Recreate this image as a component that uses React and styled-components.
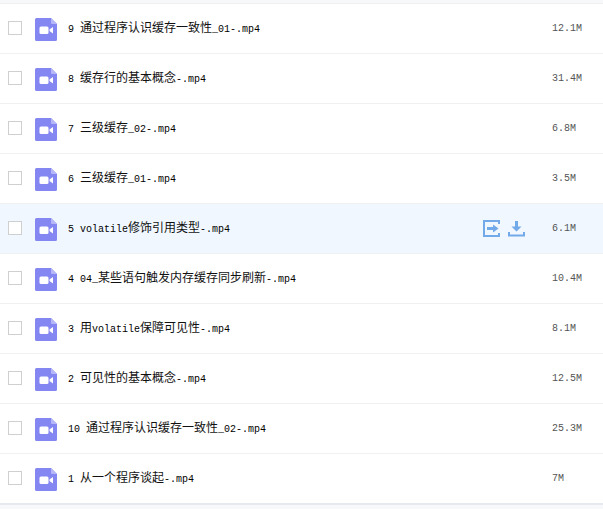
import React from "react";
import styled, { createGlobalStyle } from "styled-components";

const files = [
  { name: "9 通过程序认识缓存一致性_01-.mp4", size: "12.1M" },
  { name: "8 缓存行的基本概念-.mp4", size: "31.4M" },
  { name: "7 三级缓存_02-.mp4", size: "6.8M" },
  { name: "6 三级缓存_01-.mp4", size: "3.5M" },
  { name: "5 volatile修饰引用类型-.mp4", size: "6.1M", active: true },
  { name: "4 04_某些语句触发内存缓存同步刷新-.mp4", size: "10.4M" },
  { name: "3 用volatile保障可见性-.mp4", size: "8.1M" },
  { name: "2 可见性的基本概念-.mp4", size: "12.5M" },
  { name: "10 通过程序认识缓存一致性_02-.mp4", size: "25.3M" },
  { name: "1 从一个程序谈起-.mp4", size: "7M" },
];

const GlobalStyle = createGlobalStyle`
  html, body {
    margin: 0;
    padding: 0;
    background: #f7f8fa;
  }
`;

const Page = styled.div`
  width: 603px;
  height: 509px;
  padding-top: 3px;
  box-sizing: border-box;
  overflow: hidden;
  font-family: "Noto Sans CJK SC", "Liberation Mono", monospace;
  font-size: 12px;
  color: #111;
`;

const List = styled.div`
  border-bottom: 2px solid #e6eaf0;
  background: #fff;
`;

const Row = styled.div`
  display: flex;
  align-items: center;
  height: 50px;
  box-sizing: border-box;
  border-top: 1px solid #f0f0f0;
  background: ${(p) => (p.$active ? "#f0f7ff" : "#fff")};
`;

const Check = styled.span`
  align-self: flex-start;
  width: 14px;
  height: 14px;
  margin: 17px 0 0 8px;
  box-sizing: border-box;
  border: 1px solid #cfcfcf;
  background: #fff;
  flex: none;
`;

const FileIcon = styled.svg`
  align-self: flex-start;
  width: 22px;
  height: 23px;
  margin: 14px 0 0 13px;
  flex: none;
`;

const Name = styled.div`
  margin-left: 11px;
  flex: 1;
  white-space: nowrap;
  line-height: 16px;
`;

const Latin = styled.span`
  font-family: "Liberation Mono", monospace;
  font-size: 10px;
  color: #000;
`;

const Actions = styled.div`
  display: flex;
  align-items: center;
  gap: 8px;
  margin-right: 27px;
`;

const Size = styled.div`
  width: 51px;
  font-family: "Liberation Mono", monospace;
  font-size: 10px;
  color: #555;
  flex: none;
`;

function VideoFile() {
  return (
    <FileIcon viewBox="0 0 22 23">
      <path d="M1.5 0H16L22 6V21.5a1.5 1.5 0 0 1-1.5 1.5H1.5A1.5 1.5 0 0 1 0 21.5V1.5A1.5 1.5 0 0 1 1.5 0Z" fill="#8487f2" />
      <path d="M16 0L22 6H17a1 1 0 0 1-1-1Z" fill="#b5b7f8" />
      <rect x="4.5" y="8.5" width="9" height="7.5" rx="1.5" fill="#fff" />
      <path d="M14.5 11.5L18 9V15.5L14.5 13Z" fill="#fff" />
    </FileIcon>
  );
}

function OpenIcon() {
  return (
    <svg width="17" height="17" viewBox="0 0 17 17" fill="none">
      <path d="M16 4V1H1V16H16V13" stroke="#72a9e8" strokeWidth="2" />
      <path d="M4 7H10V4.5L15.5 8.5L10 12.5V10H4Z" fill="#72a9e8" />
    </svg>
  );
}

function DownloadIcon() {
  return (
    <svg width="17" height="17" viewBox="0 0 17 17" fill="none">
      <path d="M7 1H10V6.5H13.5L8.5 11.5L3.5 6.5H7Z" fill="#72a9e8" />
      <path d="M1 12V15.5H16V12" stroke="#72a9e8" strokeWidth="2" />
    </svg>
  );
}

// latin runs are narrower than the cjk ones in the original font
function splitName(name) {
  return name.split(/([\x00-\x7f]+)/).map((part, i) =>
    /^[\x00-\x7f]+$/.test(part) ? <Latin key={i}>{part}</Latin> : part
  );
}

export default function App() {
  return (
    <Page>
      <GlobalStyle />
      <List>
        {files.map((file) => (
          <Row key={file.name} $active={file.active}>
            <Check />
            <VideoFile />
            <Name>{splitName(file.name)}</Name>
            {file.active && (
              <Actions>
                <OpenIcon />
                <DownloadIcon />
              </Actions>
            )}
            <Size>{file.size}</Size>
          </Row>
        ))}
      </List>
    </Page>
  );
}
